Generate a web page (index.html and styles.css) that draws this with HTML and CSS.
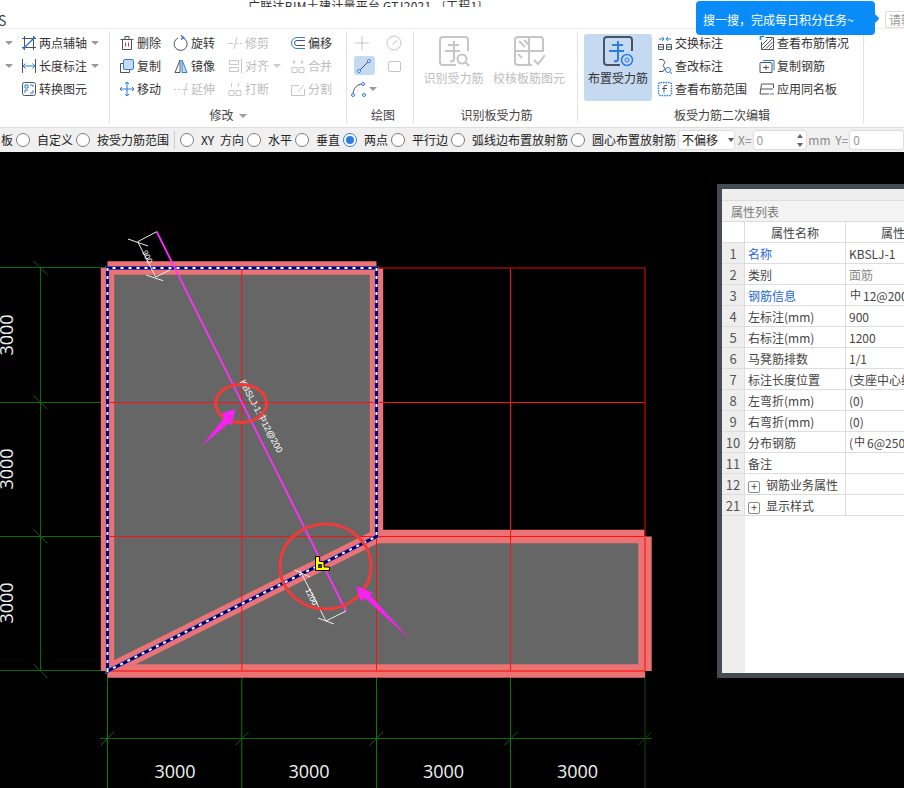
FILE: index.html
```html
<!DOCTYPE html>
<html lang="zh-CN">
<head>
<meta charset="utf-8">
<title>广联达BIM土建计量平台</title>
<link rel="stylesheet" href="styles.css">
</head>
<body>
<div class="app">
  <header class="topbar">
    <div class="title">广联达BIM土建计量平台 GTJ2021 - [工程1]</div>
    <div class="tab">S</div>
    <div class="tip">搜一搜，完成每日积分任务~</div>
    <div class="search">请输</div>
  </header>

  <section class="ribbon">
    <div class="group g0">
      <div class="tools g0-tools">
        <span class="caret gap"></span>
        <div class="tool"><svg class="ic" viewBox="0 0 16 16"><path class="d" d="M3.500 1v14M12.500 1v14M1 3.500h14M1 12.500h14"/><path class="b w15" d="M2 14L14 2"/></svg><span>两点辅轴</span><span class="caret"></span></div>
        <span class="caret gap"></span>
        <div class="tool"><svg class="ic" viewBox="0 0 16 16"><path class="d" d="M1.500 1v14M14.500 1v14"/><path class="b" d="M2 8h12M4.500 5.500L2 8l2.500 2.500M11.500 5.500L14 8l-2.500 2.500"/></svg><span>长度标注</span><span class="caret"></span></div>
        <span></span>
        <div class="tool"><svg class="ic" viewBox="0 0 16 16"><rect class="d" x="1.500" y="1.500" width="13" height="13" rx="2"/><path class="b" d="M4 4h3v3H4zM9 12h3V9M9 4h3v2M4 12V9h3"/></svg><span>转换图元</span></div>
      </div>
    </div>

    <div class="group g1">
      <div class="tools g1-tools">
        <div class="tool"><svg class="ic" viewBox="0 0 16 16"><path class="d" d="M3.500 4.500h9v10h-9zM1.500 4.500h13M6 4.500v-3h4v3"/><path class="r" d="M6.500 7.500v4M9.500 7.500v4"/></svg><span>删除</span></div>
        <div class="tool"><svg class="ic" viewBox="0 0 16 16"><path class="d" d="M9.500 2.700A6.500 6.500 0 1 1 5 3"/><path class="b w15" d="M8 .5l2.500 2L8 4.500"/></svg><span>旋转</span></div>
        <div class="tool off"><svg class="ic" viewBox="0 0 16 16"><path class="g" d="M1 8.500h5M9 8.500h2M13 8.500h2M7 14L10 2"/></svg><span>修剪</span></div>
        <div class="tool"><svg class="ic" viewBox="0 0 16 16"><path class="b" d="M15 2.500H7a5.500 5.500 0 0 0 0 11h8"/><path class="d" d="M15 5.500H7a2.500 2.500 0 0 0 0 5h8"/></svg><span>偏移</span></div>

        <div class="tool"><svg class="ic" viewBox="0 0 16 16"><path class="d" d="M4 5.500H1.500v9h9V12"/><rect class="bf" x="4.500" y="1.500" width="10" height="10" rx="1.500"/></svg><span>复制</span></div>
        <div class="tool"><svg class="ic" viewBox="0 0 16 16"><path class="d" d="M7 2L2 14.500h5z"/><path class="bf" d="M9 2l5 12.500H9z"/></svg><span>镜像</span></div>
        <div class="tool off"><svg class="ic" viewBox="0 0 16 16"><path class="g" d="M14.500 1v14M2.500 2.500h9v4h-9zM2.500 9.500h9v4h-9z"/></svg><span>对齐</span><span class="caret light"></span></div>
        <div class="tool off"><svg class="ic" viewBox="0 0 16 16"><path class="g" d="M2 9.500h5v5H2zM9 9.500h5v5H9zM4 2v4M2.500 4h3M12 2v4M10.500 4h3"/></svg><span>合并</span></div>

        <div class="tool"><svg class="ic" viewBox="0 0 16 16"><path class="b" d="M8 1v14M1 8h14M6 3l2-2 2 2M6 13l2 2 2-2M3 6L1 8l2 2M13 6l2 2-2 2"/></svg><span>移动</span></div>
        <div class="tool off"><svg class="ic" viewBox="0 0 16 16"><path class="g" d="M1 8.500h2M5 8.500h2M9 8.500h6M11 14l3-12"/></svg><span>延伸</span></div>
        <div class="tool off"><svg class="ic" viewBox="0 0 16 16"><path class="g" d="M2 9.500h5v5H2zM9 9.500h5v5H9zM4.500 2v4M12 2l-1 4"/></svg><span>打断</span></div>
        <div class="tool off"><svg class="ic" viewBox="0 0 16 16"><path class="g" d="M14.500 8v6.500h-13v-10H9M8 11l6-7"/></svg><span>分割</span></div>
      </div>
      <div class="group-label">修改<span class="caret label-caret"></span></div>
    </div>

    <div class="group g2">
      <div class="tools g2-tools">
        <div class="cell"><svg class="ic nudge" viewBox="0 0 16 16"><path class="g" d="M8 1v5M8 10v5M1 8h5M10 8h5"/><circle class="gf" cx="8" cy="8" r="1.500"/></svg></div>
        <div class="cell"><svg class="ic" viewBox="0 0 16 16"><circle class="g" cx="8" cy="8" r="7"/><path class="g" d="M6 10l5-5"/></svg></div>
        <div class="cell"><div class="active-cell"><svg class="ic" viewBox="0 0 16 16"><path class="d" d="M3 13L13 3"/><circle class="node" cx="3" cy="13" r="1.500"/><circle class="node" cx="13" cy="3" r="1.500"/></svg></div></div>
        <div class="cell"><svg class="ic" viewBox="0 0 16 16"><rect class="g" x="2.500" y="3.500" width="12" height="10" rx="1.500"/></svg></div>
        <div class="cell"><svg class="ic" viewBox="0 0 16 16"><path class="d" d="M2 14C2 7 6 3 12 3"/><circle class="node" cx="2" cy="14" r="1.500"/><circle class="node" cx="12" cy="3" r="1.500"/><circle class="node" cx="13" cy="14" r="1.500"/></svg><span class="caret"></span></div>
      </div>
      <div class="group-label">绘图</div>
    </div>

    <div class="group g3">
      <div class="bigs">
        <div class="big off w62"><svg class="bigic" viewBox="0 0 32 32"><path class="g w2" d="M30 16V5a3 3 0 0 0-3-3H5a3 3 0 0 0-3 3v22a3 3 0 0 0 3 3h13"/><path class="g w2" d="M10 10h11M7 16h15M16 6v18q0 3-4 2"/><circle class="g w2" cx="24" cy="24" r="4.500"/><path class="g w2" d="M27.500 27.500L31 31"/></svg><span>识别受力筋</span></div>
        <div class="big off w72"><svg class="bigic" viewBox="0 0 32 32"><path class="g w2" d="M19 30H5a3 3 0 0 1-3-3V5a3 3 0 0 1 3-3h22a3 3 0 0 1 3 3v12M16 2v28M2 16h28M6 6l6 6M11 5l5 5M5 19l4 4"/><path class="g w2" d="M21 25l4 4 7-9"/></svg><span>校核板筋图元</span></div>
      </div>
      <div class="group-label">识别板受力筋</div>
    </div>

    <div class="group g4">
      <div class="g4-body">
        <div class="big sel"><svg class="bigic" viewBox="0 0 32 32"><path class="d w2" d="M30 16V5a3 3 0 0 0-3-3H5a3 3 0 0 0-3 3v22a3 3 0 0 0 3 3h13"/><path class="b w2" d="M10 10h11M7 16h15M16 6v18q0 3-4 2"/><circle class="b w15" cx="25" cy="25" r="5.500"/><circle class="b" cx="25" cy="25" r="2"/></svg><span>布置受力筋</span></div>
        <div class="tools g4-tools">
          <div class="tool"><svg class="ic" viewBox="0 0 16 16"><path class="d" d="M1.500 9.500h5v5h-5zM9.500 9.500h5v5h-5zM1.500 12h5M9.500 12h5"/><path class="b" d="M2 4h5M5 2l2 2-2 2M14 4H9M11 2L9 4l2 2"/></svg><span>交换标注</span></div>
          <div class="tool"><svg class="ic" viewBox="0 0 16 16"><path class="d" d="M6.500 2.500h8v12h-12V7"/><path class="d" d="M3.500 13.500L13.500 3.500M7 13.500l6.500-6.500M3.500 9.500l5-5M10.500 13.500l3-3"/><path class="b w15" d="M1.500 5V1.500H5"/></svg><span>查看布筋情况</span></div>
          <div class="tool"><svg class="ic" viewBox="0 0 16 16"><path class="d" d="M2 1.500h4l2 3-2 3 2 3-2 3H2"/><circle class="b" cx="11" cy="12" r="2.500"/><path class="b" d="M13 14l2 2"/></svg><span>查改标注</span></div>
          <div class="tool"><svg class="ic" viewBox="0 0 16 16"><path class="d" d="M12 4.500H2a1 1 0 0 0-1 1v9h12V6a1.500 1.500 0 0 0-1-1.500zM7 7v5M4 9.500h6"/><path class="b" d="M4 2.500h11v10"/></svg><span>复制钢筋</span></div>
          <div class="tool"><svg class="ic" viewBox="0 0 16 16"><rect class="b dash" x="1.500" y="1.500" width="13" height="13" rx="2"/><path class="d" d="M10 4.500H8a1 1 0 0 0-1 1v6M5 7.500h5"/></svg><span>查看布筋范围</span></div>
          <div class="tool"><svg class="ic" viewBox="0 0 16 16"><path class="d" d="M14.500 7V3H2.500L1 13h9M2 8h12"/><path class="b" d="M11 13h4"/></svg><span>应用同名板</span></div>
        </div>
      </div>
      <div class="group-label">板受力筋二次编辑</div>
    </div>
  </section>

  <section class="optbar">
    <span class="otext">板</span>
    <label class="opt"><span class="radio"></span>自定义</label>
    <label class="opt"><span class="radio"></span>按受力筋范围</label>
    <span class="osep"></span>
    <label class="opt xy"><span class="radio"></span>XY 方向</label>
    <label class="opt"><span class="radio"></span>水平</label>
    <label class="opt"><span class="radio"></span>垂直</label>
    <label class="opt"><span class="radio on"></span>两点</label>
    <label class="opt"><span class="radio"></span>平行边</label>
    <label class="opt"><span class="radio"></span>弧线边布置放射筋</label>
    <label class="opt"><span class="radio"></span>圆心布置放射筋</label>
    <div class="select">不偏移<span class="caret dark"></span></div>
    <span class="olabel">X=</span>
    <div class="num x">0<span class="spin"><i class="up"></i><i class="down"></i></span></div>
    <span class="olabel mm">mm Y=</span>
    <div class="num y">0</div>
  </section>

  <main class="canvas">
    <svg class="drawing" viewBox="0 153 904 635" aria-label="板受力筋布置图">
      <!-- fill -->
      <path class="slab" d="M107.500 268H376.500V536.500H645V671H107.500Z"/>
      <!-- dimensions -->
      <g class="gl">
        <path d="M0 267.500H107M0 402.500H107M0 536.500H107M0 670.500H107M40.500 268V671M100 738.500H652"/>
        <path d="M33.500 261L47.500 275M33.500 395.400L47.500 409.400M33.500 529.400L47.500 543.400M33.500 664L47.500 678"/>
        <path d="M101 745L114 732M235.500 745L248.500 732M370 745L383 732M504.500 745L517.500 732"/>
        <path class="glb" d="M107.500 671V788M241.800 671V788M376.500 671V788M510.500 671V788"/>
        <path class="gld" d="M645 671V788M638.500 745L651.500 732"/>
      </g>
      <!-- bands -->
      <g class="band">
        <path d="M107.500 268V671"/>
        <path d="M107.500 268H376.500"/>
        <path d="M376.500 268V536.500"/>
        <path d="M376.500 536.500H645"/>
        <path d="M645 536.500V671"/>
        <path d="M107.500 671H645"/>
        <path d="M107.500 671L376.500 536.500"/>
      </g>
      <!-- red grid -->
      <g class="rd">
        <path d="M107.500 402.500H645M107.500 536.500H645M241.800 268V671M376.500 536.500V671M510.500 268V671"/>
        <path class="rd2" d="M108 671H645"/>
        <path class="rdd" d="M376.500 268H645M645 268V536"/>
        <path class="rd2" d="M645 536V671"/>
      </g>
      <!-- selected outline -->
      <g class="outline">
        <path class="o1" d="M107.500 671V268H376.500V536.500Z"/>
        <path class="o2" d="M107.500 671V268H376.500V536.500Z"/>
        <path class="o3" d="M107.500 671V268H376.500V536.500Z"/>
      </g>
      <!-- rebar -->
      <path class="rebar" d="M156.700 231.700L346 611"/>
      <g class="dim">
        <path d="M156.700 231.700L137.700 241.700L155.700 277L170 270M128 239L148 246M146 275L163 280.700"/>
        <path d="M346 611L326 621L300 570.700M294.500 570L310 577M318 618L334 624"/>
      </g>
      <text class="rtext" transform="translate(145 258) rotate(63)" text-anchor="middle">900</text>
      <text class="rtext" transform="translate(309 598) rotate(63)" text-anchor="middle">1200</text>
      <text class="rtext long" transform="translate(258.500 417.500) rotate(62)" text-anchor="middle">KBSLJ-1:中12@200</text>
      <!-- marker -->
      <path class="marker" d="M315.500 556.500H319.500V561.500H324V567H329.500V570.500H315.500Z"/>
      <rect class="marker-in" x="318" y="564" width="4" height="4"/>
      <!-- annotation -->
      <ellipse class="ring" cx="241" cy="403.500" rx="25.500" ry="19"/>
      <ellipse class="ring" cx="325.500" cy="566.500" rx="45.500" ry="42.500"/>
      <path class="arrow" d="M235.700 409.300L222 413L224 418L201.700 446L229 423L231 426Z"/>
      <path class="arrow" d="M356 586L373 592.700L370 595L410.700 640L365 598L361 601.700Z"/>
      <!-- axis numbers -->
      <g class="axis">
        <text transform="translate(13 335) rotate(-90)" text-anchor="middle">3000</text>
        <text transform="translate(13 469) rotate(-90)" text-anchor="middle">3000</text>
        <text transform="translate(13 603) rotate(-90)" text-anchor="middle">3000</text>
        <text x="175" y="778" text-anchor="middle">3000</text>
        <text x="309" y="778" text-anchor="middle">3000</text>
        <text x="443.500" y="778" text-anchor="middle">3000</text>
        <text x="577.500" y="778" text-anchor="middle">3000</text>
      </g>
    </svg>

    <aside class="panel">
      <div class="panel-strip"></div>
      <div class="panel-title">属性列表</div>
      <table class="props">
        <colgroup><col class="c1"><col class="c2"><col class="c3"></colgroup>
        <tr class="head"><td></td><td class="ctr">属性名称</td><td class="ctr">属性值</td></tr>
        <tr><td class="idx">1</td><td class="link">名称</td><td>KBSLJ-1</td></tr>
        <tr><td class="idx">2</td><td>类别</td><td class="muted">面筋</td></tr>
        <tr><td class="idx">3</td><td class="link">钢筋信息</td><td><span class="sym">中</span>12@200</td></tr>
        <tr><td class="idx">4</td><td>左标注(mm)</td><td>900</td></tr>
        <tr><td class="idx">5</td><td>右标注(mm)</td><td>1200</td></tr>
        <tr><td class="idx">6</td><td>马凳筋排数</td><td>1/1</td></tr>
        <tr><td class="idx">7</td><td>标注长度位置</td><td>(支座中心线)</td></tr>
        <tr><td class="idx">8</td><td>左弯折(mm)</td><td>(0)</td></tr>
        <tr><td class="idx">9</td><td>右弯折(mm)</td><td>(0)</td></tr>
        <tr><td class="idx">10</td><td>分布钢筋</td><td>(<span class="sym">中</span>6@250)</td></tr>
        <tr><td class="idx">11</td><td>备注</td><td></td></tr>
        <tr><td class="idx">12</td><td><span class="plus">+</span>钢筋业务属性</td><td></td></tr>
        <tr><td class="idx">21</td><td><span class="plus">+</span>显示样式</td><td></td></tr>
      </table>
      <div class="panel-fill"></div>
    </aside>
  </main>
</div>
</body>
</html>
```
FILE: styles.css
```css
* { box-sizing: border-box; }
html, body { margin: 0; padding: 0; }
body {
  width: 904px;
  height: 788px;
  overflow: hidden;
  background: #000;
  font: 12px/16px "Noto Sans CJK SC", "Noto Sans", sans-serif;
  color: #333;
}
.app { width: 904px; height: 788px; display: flex; flex-direction: column; overflow: hidden; position: relative; }

/* top bar */
.topbar { height: 29px; background: #fff; border-bottom: 1px solid #eee; position: relative; flex: none; }
.title { height: 7px; padding-left: 248px; line-height: 11px; overflow: hidden; white-space: pre; color: #333; letter-spacing: .25px; }
.tab { margin: 5px 0 0 -2px; font-size: 14px; line-height: 16px; color: #444; }
.tip {
  position: absolute; left: 696px; top: 1px; width: 179px; height: 34px; z-index: 5;
  background: #0a8cf8; color: #fff; border-radius: 4px; padding-left: 7px; line-height: 37px;
}
.tip::after {
  content: ""; position: absolute; right: -3px; top: 14px; width: 7px; height: 7px;
  background: #0a8cf8; transform: rotate(45deg);
}
.search {
  position: absolute; left: 885px; top: 11px; width: 40px; height: 17px;
  border: 1px solid #ddd; border-radius: 2px; padding-left: 3px; color: #999; line-height: 15px; overflow: hidden; white-space: nowrap;
}

/* ribbon */
.ribbon { height: 98px; background: #fff; display: flex; padding-top: 2px; flex: none; }
.group { height: 92px; border-right: 1px solid #e2e2e2; display: flex; flex-direction: column; padding-top: 1px; flex: none; }
.group-label { margin-top: auto; height: 16px; text-align: center; color: #444; }
.g0 { width: 110px; padding-left: 5px; }
.g1 { width: 237px; padding-left: 9px; }
.g2 { width: 67px; padding-left: 6px; }
.g3 { width: 164px; padding-left: 9px; }
.g4 { width: 286px; padding-left: 6px; }
.g1 .group-label { padding-right: 9px; }
.g3 .group-label { padding-right: 7px; }
.g4 .group-label { padding-right: 3px; }
.tools { display: grid; grid-auto-rows: 23px; margin-top: -1px; }
.g0-tools { grid-template-columns: 16px auto; justify-items: start; align-items: center; }
.g1-tools { grid-template-columns: 54px 54px 63px auto; }
.g2-tools { grid-template-columns: 22px 22px; column-gap: 8px; }
.g4-tools { grid-template-columns: 102px auto; margin-top: -3px; }
.tool { display: flex; align-items: center; gap: 2px; height: 23px; white-space: nowrap; }
.tool.off { color: #bdbdbd; }
.cell { display: flex; align-items: center; justify-content: center; height: 23px; position: relative; }
.nudge { margin-right: 4px; }
.active-cell { width: 21px; height: 19px; background: #c5d9f1; border-radius: 3px; display: flex; align-items: center; justify-content: center; }
.ic { width: 16px; height: 16px; flex: none; fill: none; stroke-width: 1; }
.bigic { width: 32px; height: 32px; fill: none; stroke-width: 1; display: block; }
.d { stroke: #4b5361; }
.b { stroke: #2b7de0; }
.g { stroke: #c6c6c6; }
.r { stroke: #e02c2c; }
.bf { stroke: #2b7de0; fill: #c5dbf6; }
.gf { fill: #c6c6c6; stroke: none; }
.node { stroke: #2b7de0; fill: #fff; }
.w15 { stroke-width: 1.5; }
.w2 { stroke-width: 2; }
.dash { stroke-dasharray: 1.500 1; stroke-width: 1.500; }
.caret {
  display: inline-block; width: 0; height: 0; flex: none;
  border-left: 4px solid transparent; border-right: 4px solid transparent; border-top: 4px solid #9a9a9a;
  margin-left: 2px;
}
.caret.gap { margin-left: 0; }
.caret.light { border-top-color: #ccc; }
.caret.dark { border-top-color: #555; margin-left: 10px; border-left-width: 3px; border-right-width: 3px; }
.label-caret { margin-left: 5px; vertical-align: 2px; }
.bigs { display: flex; gap: 9px; margin-top: 2px; }
.big { display: flex; flex-direction: column; align-items: center; height: 67px; padding-top: 1px; white-space: nowrap; }
.big svg { margin-bottom: 3px; }
.big.off { color: #bdbdbd; }
.w62 { width: 61px; }
.w72 { width: 72px; }
.big.sel { width: 68px; background: #c5d9f1; border-radius: 3px; color: #333; }
.g4-body { display: flex; gap: 5px; margin-top: 2px; }

/* option bar */
.optbar {
  height: 26px; background: #f0f0f0; display: flex; align-items: center; gap: 3px; flex: none;
  padding-left: 1px; border-top: 1px solid #ddd; border-bottom: 1px solid #000; white-space: nowrap; color: #222;
}
.opt { display: flex; align-items: center; gap: 7px; }
.opt.xy { word-spacing: 3px; }
.radio { width: 14px; height: 14px; border-radius: 50%; border: 1px solid #7d7d7d; background: #fff; display: block; position: relative; flex: none; }
.radio.on { border-color: #2b7de0; }
.radio.on::after { content: ""; position: absolute; left: 2px; top: 2px; width: 8px; height: 8px; border-radius: 50%; background: #2b7de0; }
.osep { width: 1px; height: 18px; background: #ccc; margin: 0 2px 0 2px; }
.select {
  width: 58px; height: 20px; margin-left: -1px; background: #fff; border: 1px solid #ddd; border-radius: 3px;
  padding-left: 3px; display: flex; align-items: center;
}
.olabel { color: #888; }
.olabel.mm { margin-left: -2px; word-spacing: 2px; }
.num { height: 20px; background: #fff; border: 1px solid #ddd; border-radius: 3px; padding-left: 3px; color: #999; position: relative; line-height: 18px; }
.num.x { width: 60px; margin-left: -2px; }
.num.y { width: 60px; margin-left: -2px; }
.spin { position: absolute; right: 1px; top: 2px; width: 8px; height: 14px; }
.spin i { position: absolute; left: 0; width: 0; height: 0; border-left: 3px solid transparent; border-right: 3px solid transparent; }
.spin .up { top: 1px; border-bottom: 4px solid #666; }
.spin .down { bottom: 0; border-top: 4px solid #666; }

/* canvas */
.canvas { position: relative; flex: 1; background: #000; min-height: 0; }
.drawing { display: block; width: 904px; height: 635px; }
.drawing path, .drawing ellipse { fill: none; }
.drawing .slab { fill: #666; }
.gl path { stroke: #0a6a0a; stroke-width: 1; }
.gl .glb { stroke: #067a06; }
.gl .gld { stroke: #0a4a0a; }
.band path { stroke: #ec7373; stroke-width: 13.400; }
.rd path { stroke: #ff1010; stroke-width: 1; }
.rd .rd2 { stroke: #f53a3a; stroke-width: 2; }
.rd .rdd { stroke: #990808; stroke-width: 1.500; }
.outline path { stroke-linejoin: miter; }
.outline .o1 { stroke: #8a6cff; stroke-width: 4; }
.outline .o2 { stroke: #00005c; stroke-width: 3; }
.outline .o3 { stroke: #fff; stroke-width: 2; stroke-dasharray: 3 5; }
.drawing .rebar { stroke: #ff30ff; stroke-width: 1.800; }
.dim path { stroke: #eee; stroke-width: 1; }
.rtext { fill: #fff; font-size: 8px; font-family: "Liberation Sans", "Noto Sans CJK SC", sans-serif; }
.rtext.long { font-size: 9px; }
.drawing .marker { fill: #ffff00; stroke: #000; stroke-width: 1; }
.marker-in { fill: #333; }
.drawing .ring { stroke: #f23a3a; stroke-width: 3; }
.drawing .arrow { fill: #f522f0; }
.axis text { fill: #f2f2f2; font-size: 18px; font-family: "Open Sans", sans-serif; }

/* property panel */
.panel {
  position: absolute; left: 717px; top: 31px; width: 241px; height: 494px;
  background: #fff; border: 5px solid #454b53; display: flex; flex-direction: column;
}
.panel-strip { height: 12px; background: #eeeeee; border-bottom: 1px solid #ddd; flex: none; }
.panel-title { height: 21px; padding-top: 1px; line-height: 20px; background: #f3f3f3; padding-left: 9px; color: #7a7a7a; border-bottom: 1px solid #ddd; flex: none; }
.props { border-collapse: separate; border-spacing: 0; table-layout: fixed; width: 231px; flex: none; }
.c1 { width: 23px; }
.c2 { width: 101px; }
.c3 { width: 107px; }
.props td { height: 21px; padding: 1px 0 0 3px; border-right: 1px solid #ddd; border-bottom: 1px solid #ddd; white-space: nowrap; overflow: hidden; line-height: 18px; color: #444; }
.props td.ctr { text-align: center; padding: 1px 0 0; }
.props td.idx { background: #eee; text-align: center; padding: 1px 0 0; font-size: 13px; color: #555; }
.props .head td:first-child { background: #fff; }
.props td.link { color: #2566e0; }
.props td.muted { color: #8a8a8a; }
.sym { font-size: 11px; line-height: 0; vertical-align: 2px; margin: 0 2px 0 1px; }
.plus {
  display: inline-block; width: 12px; height: 12px; border: 1px solid #8a8a8a; border-radius: 2px; margin: 0 6px 0 0;
  line-height: 9px; text-align: center; font-size: 11px; vertical-align: -1px;
}
.panel-fill { flex: 1; width: 23px; background: #eee; }
```
